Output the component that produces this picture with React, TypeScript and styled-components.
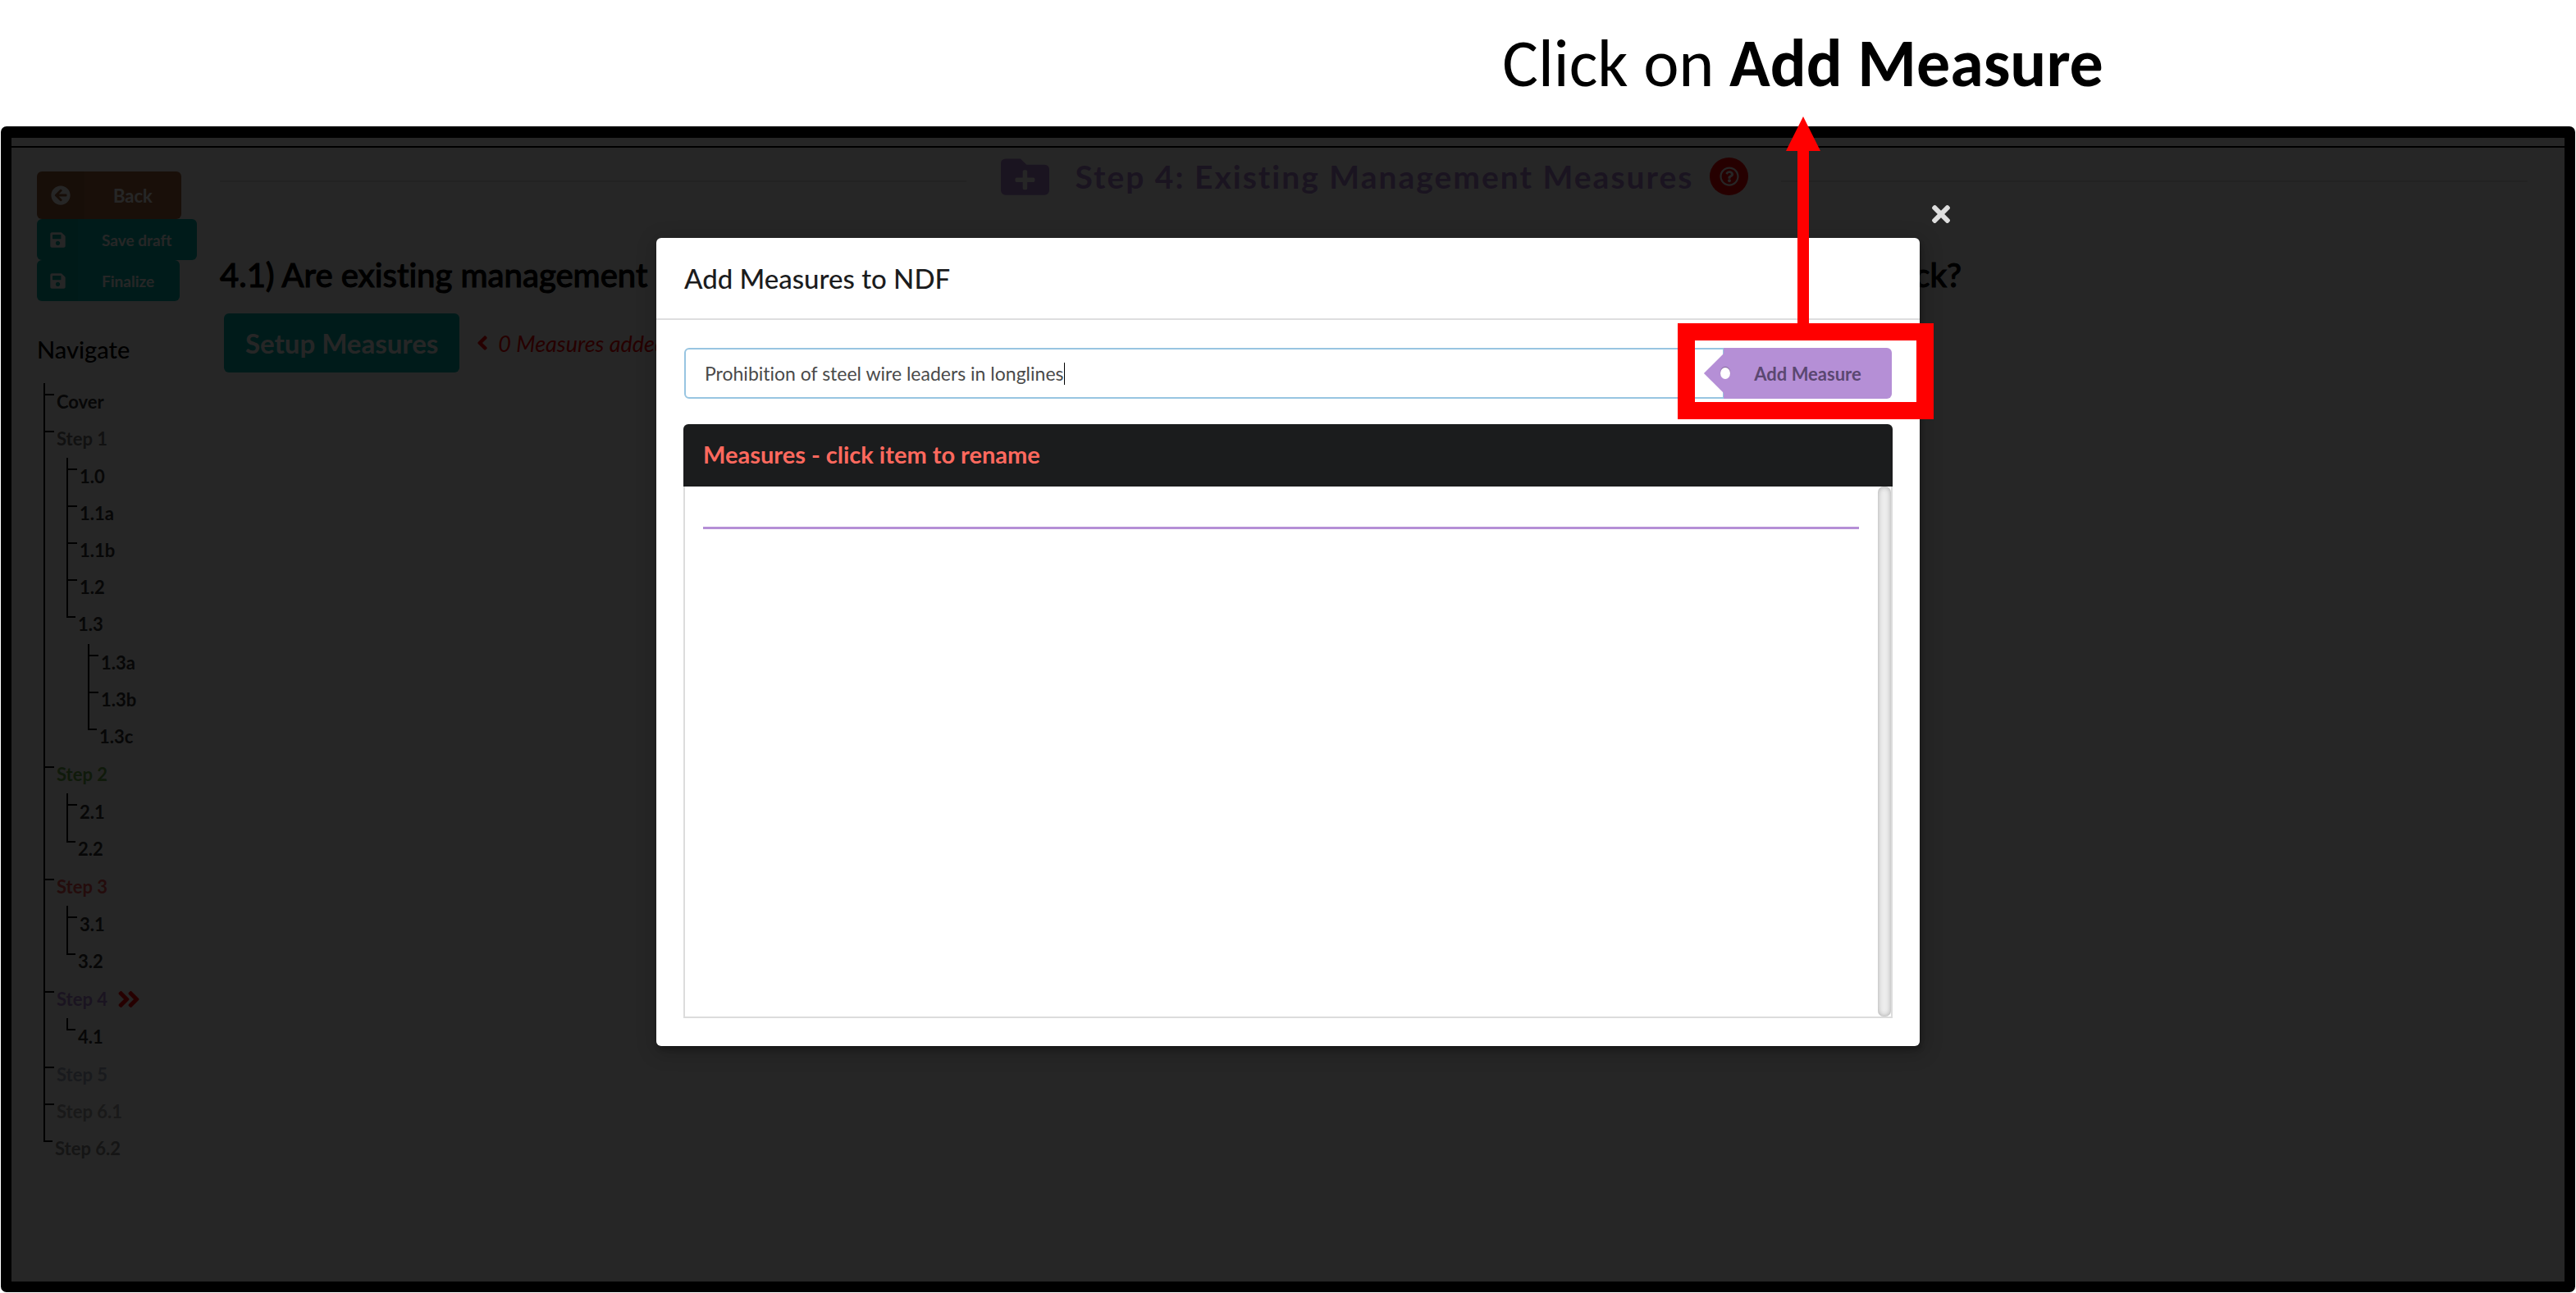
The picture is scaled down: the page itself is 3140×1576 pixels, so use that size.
import React, { useState } from "react";
import styled, { createGlobalStyle } from "styled-components";
import {
  FaArrowCircleLeft,
  FaSave,
  FaFolderPlus,
  FaRegQuestionCircle,
  FaAngleDoubleRight,
  FaAngleLeft,
  FaTimes,
} from "react-icons/fa";

const GlobalStyle = createGlobalStyle`
  *, *::before, *::after { box-sizing: border-box; }
  html, body, #root { height: 100%; }
  body {
    margin: 0;
    background: #ffffff;
    color: #000000;
    font-family: Lato, "Liberation Sans", sans-serif;
    font-variant-ligatures: none;
  }
  h1, h2, h3, ul, p { margin: 0; padding: 0; }
  button, input { font-family: inherit; font-variant-ligatures: none; }
`;

const Slide = styled.main`
  display: flex;
  flex-direction: column;
  min-height: 100%;
  padding: 0 1px 1px;
`;

const Caption = styled.p`
  margin-left: 40%;
  height: 154px;
  line-height: 154px;
  text-align: center;
  font-family: Carlito, Lato, sans-serif;
  font-size: 82px;
`;

const Frame = styled.div`
  position: relative;
  flex: 1;
  display: flex;
  flex-direction: column;
  border: 13px solid #000000;
  border-top-width: 14px;
  border-radius: 7px;
  background: #ffffff;
`;

const TopRule = styled.div`
  height: 12px;
  border-bottom: 2px solid #000000;
`;

const Columns = styled.div`
  display: flex;
`;

const Sidebar = styled.aside`
  display: flex;
  flex-direction: column;
  align-items: flex-start;
  width: 254px;
  padding: 29px 0 0 31px;
`;

const SideButton = styled.button<{ $tone: string; $large?: boolean }>`
  display: flex;
  align-items: center;
  height: ${(p) => (p.$large ? 58 : 50)}px;
  padding: 0;
  border: 0;
  border-radius: 6px;
  background: ${(p) => p.$tone};
  color: #ffffff;
  font-size: ${(p) => (p.$large ? 22 : 19)}px;
  font-weight: 700;
`;

const SideIcon = styled.span<{ $large?: boolean }>`
  display: flex;
  align-items: center;
  justify-content: center;
  align-self: stretch;
  width: ${(p) => (p.$large ? 58 : 50)}px;
  border-radius: 6px 0 0 6px;
  background: rgba(0, 0, 0, 0.05);
`;

const SideLabel = styled.span<{ $large?: boolean }>`
  padding: ${(p) => (p.$large ? "0 35px" : "0 31px 0 29px")};
`;

const NavTitle = styled.h2`
  margin-top: 36px;
  font-size: 29px;
  line-height: 46px;
  font-weight: 500;
`;

const Tree = styled.ul<{ $level: number }>`
  list-style: none;
  ${(p) => p.$level === 0 && "margin: 18px 0 0 8px;"}
  ${(p) => p.$level === 1 && "margin: 1px 0 1px 12px;"}
  ${(p) => p.$level === 2 && "margin: 2px 0 0 12px;"}
`;

const TreeRow = styled.li`
  display: flex;
`;

const Connector = styled.span<{ $last: boolean }>`
  display: flex;
  flex-direction: column;
  width: ${(p) => (p.$last ? 14 : 16)}px;
`;

const Elbow = styled.span`
  width: calc(100% - 3px);
  height: 15px;
  border-left: 2px solid #000000;
  border-bottom: 2px solid #000000;
`;

const Stem = styled.span`
  flex: 1;
  border-left: 2px solid #000000;
`;

const NavLink = styled.a<{ $tone: string }>`
  display: flex;
  align-items: center;
  gap: 10px;
  height: 45px;
  color: ${(p) => p.$tone};
  font-size: 22px;
  font-weight: 700;
  text-decoration: none;
`;

const Content = styled.section`
  flex: 1;
  padding-right: 45px;
`;

const StepHeader = styled.header`
  display: flex;
  align-items: center;
  height: 82px;
  color: #b184d6;

  &::before, &::after {
    content: "";
    flex: 1;
    height: 2px;
    background: #e2e2e2;
  }
`;

const StepTitle = styled.h1`
  display: flex;
  align-items: center;
  padding: 0 40px 0 42px;
  margin-top: -12px;
  font-size: 39px;
  line-height: 50px;
  letter-spacing: 2px;
  font-weight: 700;
`;

const StepName = styled.span`
  margin: 0 20px 0 32px;
`;

const HelpButton = styled.button`
  display: flex;
  align-items: center;
  justify-content: center;
  width: 47px;
  height: 46px;
  padding: 0;
  border: 0;
  border-radius: 50%;
  background: #ff0000;
  color: #ffffff;
`;

const Question = styled.h2`
  margin-top: 47px;
  font-size: 40px;
  line-height: 52px;
  font-weight: 500;
  -webkit-text-stroke: 1px currentColor;
  white-space: nowrap;
`;

const SetupRow = styled.div`
  display: flex;
  align-items: center;
  margin: 21px 0 0 5px;
  gap: 14px;
`;

const SetupButton = styled.button`
  height: 72px;
  padding: 0 26px;
  border: 0;
  border-radius: 6px;
  background: #00b5ad;
  color: #ffffff;
  font-size: 33px;
  font-weight: 700;
`;

const Count = styled.p`
  display: flex;
  align-items: center;
  gap: 5px;
  color: #ff0000;
  font-size: 27px;
  font-style: italic;
`;

const Dimmer = styled.div`
  position: absolute;
  inset: 0;
  display: flex;
  justify-content: center;
  align-items: flex-start;
  padding-top: 122px;
  background: rgba(0, 0, 0, 0.85);
`;

const Modal = styled.div`
  position: relative;
  width: 1540px;
  max-width: 96%;
  border-radius: 6px;
  background: #ffffff;
  box-shadow: 2px 5px 5px 0 rgba(0, 0, 0, 0.2), 2px 5px 25px 3px rgba(0, 0, 0, 0.2);
`;

const CloseButton = styled.button`
  position: absolute;
  top: -45px;
  right: -42px;
  display: flex;
  padding: 0;
  border: 0;
  background: none;
  color: #dedede;
`;

const ModalHeader = styled.h2`
  height: 100px;
  padding: 0 34px;
  border-bottom: 2px solid #dededf;
  color: #1b1c1d;
  font-size: 33px;
  line-height: 98px;
  font-weight: 500;
`;

const ModalBody = styled.div`
  padding: 34px 33px;
`;

const Field = styled.div`
  display: flex;
  height: 62px;
  margin-bottom: 31px;
  padding-left: 1px;
`;

const TextBox = styled.label`
  flex: 1;
  display: flex;
  align-items: center;
  padding-left: 23px;
  border: 2px solid #98c5e1;
  border-right-width: 1px;
  border-radius: 6px 0 0 6px;
`;

const MeasureInput = styled.input`
  field-sizing: content;
  padding: 0;
  border: 0;
  outline: 0;
  background: none;
  color: #4a4a4a;
  font-size: 23px;
  line-height: 30px;
`;

const Caret = styled.span`
  width: 1px;
  height: 27px;
  background: #000000;
`;

const TagSlot = styled.div`
  position: relative;
  display: flex;
  margin-right: 1px;
`;

const TagButton = styled.button`
  position: relative;
  width: 205px;
  padding: 0;
  border: 0;
  border-radius: 0 6px 6px 0;
  background: #b58fd6;
  color: #5b4771;
  font-size: 22px;
  font-weight: 700;

  &::before {
    content: "";
    position: absolute;
    top: 50%;
    left: 0;
    width: 34px;
    height: 34px;
    background: inherit;
    transform: translate(-50%, -50%) rotate(45deg);
  }

  &::after {
    content: "";
    position: absolute;
    top: 50%;
    left: 2px;
    width: 12px;
    height: 14px;
    border-radius: 50%;
    background: #ffffff;
    box-shadow: 0 -1px 1px rgba(0, 0, 0, 0.3);
    transform: translate(-50%, -50%);
  }
`;

const Highlight = styled.div`
  position: absolute;
  inset: -30px -51px -25px -56px;
  border: 21px solid #ff0000;
  pointer-events: none;
`;

const Pointer = styled.svg`
  position: absolute;
  left: 50%;
  bottom: 100%;
  margin: 0 0 18px -24px;
`;

const TableHead = styled.h3`
  height: 76px;
  padding: 0 24px;
  border-radius: 6px 6px 0 0;
  background: #1b1c1d;
  color: #ff695e;
  font-size: 29px;
  line-height: 74px;
  font-weight: 700;
`;

const TableBody = styled.div`
  display: flex;
  height: 648px;
  border: 2px solid #dcdcdc;
  border-top: 0;
`;

const ListArea = styled.div`
  flex: 1;
  padding: 49px 23px 0 22px;
`;

const ListRule = styled.hr`
  height: 3px;
  margin: 0;
  border: 0;
  background: #b58fd6;
`;

const ScrollTrack = styled.div`
  width: 16px;
  border-radius: 7px;
  background: #ededed;
  box-shadow: inset 0 0 6px rgba(0, 0, 0, 0.3);
`;

type Node = { label: string; tone?: string; current?: boolean; children?: Node[] };

const leaf = (label: string): Node => ({ label });

const navigation: Node[] = [
  leaf("Cover"),
  {
    label: "Step 1",
    tone: "#767676",
    children: [
      leaf("1.0"),
      leaf("1.1a"),
      leaf("1.1b"),
      leaf("1.2"),
      { label: "1.3", children: [leaf("1.3a"), leaf("1.3b"), leaf("1.3c")] },
    ],
  },
  { label: "Step 2", tone: "#6ab04c", children: [leaf("2.1"), leaf("2.2")] },
  { label: "Step 3", tone: "#ee5253", children: [leaf("3.1"), leaf("3.2")] },
  { label: "Step 4", tone: "#b184d6", current: true, children: [leaf("4.1")] },
  { label: "Step 5", tone: "#a5b1c2" },
  { label: "Step 6.1", tone: "#a6a6a6" },
  { label: "Step 6.2", tone: "#8c8c8c" },
];

function NavTree({ items, level = 0 }: { items: Node[]; level?: number }) {
  return (
    <Tree $level={level}>
      {items.map((item, i) => {
        const last = i === items.length - 1;
        return (
          <TreeRow key={item.label}>
            <Connector $last={last}>
              <Elbow />
              {!last && <Stem />}
            </Connector>
            <div>
              <NavLink href="#" $tone={item.tone ?? "#303030"}>
                {item.label}
                {item.current && <FaAngleDoubleRight size={32} color="#ff0000" />}
              </NavLink>
              {item.children && <NavTree items={item.children} level={level + 1} />}
            </div>
          </TreeRow>
        );
      })}
    </Tree>
  );
}

export default function App() {
  const [measure, setMeasure] = useState("Prohibition of steel wire leaders in longlines");

  return (
    <Slide>
      <GlobalStyle />
      <Caption>
        Click on <b>Add Measure</b>
      </Caption>
      <Frame>
        <TopRule />
        <Columns>
          <Sidebar>
            <SideButton $tone="#a5673f" $large>
              <SideIcon $large>
                <FaArrowCircleLeft size={24} />
              </SideIcon>
              <SideLabel $large>Back</SideLabel>
            </SideButton>
            <SideButton $tone="#00b5ad">
              <SideIcon>
                <FaSave size={21} />
              </SideIcon>
              <SideLabel>Save draft</SideLabel>
            </SideButton>
            <SideButton $tone="#00b5ad">
              <SideIcon>
                <FaSave size={21} />
              </SideIcon>
              <SideLabel>Finalize</SideLabel>
            </SideButton>
            <NavTitle>Navigate</NavTitle>
            <NavTree items={navigation} />
          </Sidebar>
          <Content>
            <StepHeader>
              <StepTitle>
                <FaFolderPlus size={59} />
                <StepName>Step 4: Existing Management Measures</StepName>
                <HelpButton aria-label="Help">
                  <FaRegQuestionCircle size={24} />
                </HelpButton>
              </StepTitle>
            </StepHeader>
            <Question>
              4.1) Are existing management measures effective at mitigating the pressures or impacts affecting the species or its stock?
            </Question>
            <SetupRow>
              <SetupButton>Setup Measures</SetupButton>
              <Count>
                <FaAngleLeft size={28} />
                0 Measures added
              </Count>
            </SetupRow>
          </Content>
        </Columns>
        <Dimmer>
          <Modal role="dialog" aria-labelledby="modal-title">
            <CloseButton aria-label="Close">
              <FaTimes size={32} />
            </CloseButton>
            <ModalHeader id="modal-title">Add Measures to NDF</ModalHeader>
            <ModalBody>
              <Field>
                <TextBox>
                  <MeasureInput
                    aria-label="Measure name"
                    value={measure}
                    onChange={(e) => setMeasure(e.target.value)}
                  />
                  <Caret />
                </TextBox>
                <TagSlot>
                  <TagButton>Add Measure</TagButton>
                  <Highlight>
                    <Pointer width="42" height="255" viewBox="0 0 42 255" fill="#ff0000" aria-hidden="true">
                      <path d="M21 0 42 42H28V255H14V42H0Z" />
                    </Pointer>
                  </Highlight>
                </TagSlot>
              </Field>
              <TableHead>Measures - click item to rename</TableHead>
              <TableBody>
                <ListArea>
                  <ListRule />
                </ListArea>
                <ScrollTrack />
              </TableBody>
            </ModalBody>
          </Modal>
        </Dimmer>
      </Frame>
    </Slide>
  );
}
